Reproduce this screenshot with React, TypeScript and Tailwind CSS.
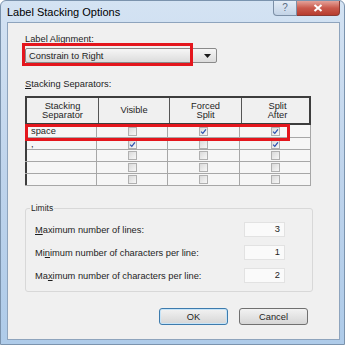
import React from 'react';

const font = { fontFamily: '"Liberation Sans", Arial, sans-serif' };

const Check: React.FC<{ on?: boolean }> = ({ on }) => (
  <span className="inline-flex w-[9px] h-[9px] border border-[#b0b0b0] bg-gradient-to-br from-[#dadada] to-[#f7f7f7] items-center justify-center">
    {on && (
      <svg viewBox="0 0 8 8" className="w-[7px] h-[7px]">
        <path d="M1.2 4.2 L3.2 6.2 L6.8 1.6" stroke="#2a4fb0" strokeWidth="1.4" fill="none" />
      </svg>
    )}
  </span>
);

const rows = [
  { sep: 'space', v: false, f: true, s: true },
  { sep: ',', v: true, f: false, s: true },
  { sep: '', v: false, f: false, s: false },
  { sep: '', v: false, f: false, s: false },
  { sep: '', v: false, f: false, s: false },
];

const limits = [
  { pre: '', u: 'M', post: 'aximum number of lines:', val: '3' },
  { pre: 'Mi', u: 'n', post: 'imum number of characters per line:', val: '1' },
  { pre: 'Ma', u: 'x', post: 'imum number of characters per line:', val: '2' },
];

export default function App() {
  return (
    <div className="w-[348px] h-[348px] bg-white text-[#1e1e1e] text-[9.3px] leading-[12px]" style={font}>
      {/* window frame */}
      <div className="w-[345px] h-[345px] flex flex-col pl-[6px] pr-[4px] pb-[4px] bg-gradient-to-b from-[#d4e3f3] via-[#bfd4ec] to-[#aecbe9] border border-[#7b93ad] rounded-t-[6px]">
        {/* title bar */}
        <div className="h-[21px] flex items-start justify-between">
          <div className="pt-[5px] text-[11px] leading-[13px] text-black">Label Stacking Options</div>
          <div className="flex">
            <div className="w-[24px] h-[15px] border border-[#7c8fa6] border-t-0 rounded-bl-[4px] bg-gradient-to-b from-[#e3ecf6] to-[#c3d3e6] flex items-center justify-center text-[10px] leading-[10px] text-[#5b6d84]">?</div>
            <div className="w-[43px] h-[15px] border border-[#8a3a33] border-t-0 border-l-0 rounded-br-[4px] bg-gradient-to-b from-[#e3a29a] via-[#c9594c] to-[#b73c2e] flex items-center justify-center">
              <svg viewBox="0 0 10 8" className="w-[10px] h-[8px]">
                <path d="M1.5 1 L8.5 7 M8.5 1 L1.5 7" stroke="white" strokeWidth="2" />
              </svg>
            </div>
          </div>
        </div>

        {/* client area */}
        <div className="relative flex-1 flex flex-col bg-[#f0f0f0] border border-[#8ea4bd] pl-[17px]">
          <div className="mt-[10px]">Label Alignment:</div>
          <div className="mt-[3px] w-[192px] h-[15px] flex items-center justify-between border border-[#8a8a8a] rounded-[2px] bg-gradient-to-b from-[#f6f6f6] to-[#dcdcdc]">
            <span className="pl-[3px]">Constrain to Right</span>
            <svg viewBox="0 0 7 4" className="w-[7px] h-[4px] mr-[5px]">
              <path d="M0 0 L7 0 L3.5 4 Z" fill="#1a1a1a" />
            </svg>
          </div>

          <div className="mt-[15px]"><span className="underline">S</span>tacking Separators:</div>

          {/* separators table */}
          <div className="mt-[6px] w-[286px] bg-[#f6f6f6]">
            <div className="grid grid-cols-[72px_71px_72px_71px] h-[29px] border-2 border-[#3d3d3d] bg-[#f0f0f0] text-center leading-[9px]">
              <div className="flex items-center justify-center border-r border-[#555]">Stacking<br />Separator</div>
              <div className="flex items-center justify-center border-r border-[#555]">Visible</div>
              <div className="flex items-center justify-center border-r border-[#555]">Forced<br />Split</div>
              <div className="flex items-center justify-center">Split<br />After</div>
            </div>
            {rows.map((r, i) => (
              <div
                key={i}
                className={`grid grid-cols-[72px_71px_72px_71px] border-b border-r border-[#a7a7a7] ${i === 0 ? 'h-[13px]' : 'h-[12px]'}`}
              >
                <div className="border-l-2 border-l-[#3d3d3d] border-r border-[#a7a7a7] pl-[4px] flex items-center">{r.sep}</div>
                <div className="border-r border-[#a7a7a7] flex items-center justify-center"><Check on={r.v} /></div>
                <div className="border-r border-[#a7a7a7] flex items-center justify-center"><Check on={r.f} /></div>
                <div className="flex items-center justify-center"><Check on={r.s} /></div>
              </div>
            ))}
          </div>

          {/* limits group */}
          <fieldset className="mt-[16px] w-[288px] h-[90px] border border-[#d8d8d8] rounded-[3px]">
            <legend className="ml-[4px] px-[1px] text-[8.5px]">Limits</legend>
            <div className="flex flex-col gap-[8px] mt-[8px] pl-[9px] pr-[27px]">
              {limits.map((l) => (
                <div key={l.val} className="flex items-center justify-between h-[15px]">
                  <span>{l.pre}<span className="underline">{l.u}</span>{l.post}</span>
                  <span className="w-[41px] h-[15px] border border-[#e2e2e2] bg-[#fafafa] text-right pr-[4px] leading-[13px]">{l.val}</span>
                </div>
              ))}
            </div>
          </fieldset>

          {/* buttons */}
          <div className="mt-[16px] flex justify-end gap-[11px] pr-[31px]">
            <button className="w-[69px] h-[17px] border border-[#3d7bad] rounded-[3px] bg-gradient-to-b from-[#f2f2f2] to-[#d6d6d6] shadow-[inset_0_0_0_1px_#c6e4f8]">OK</button>
            <button className="w-[69px] h-[17px] border border-[#707070] rounded-[3px] bg-gradient-to-b from-[#f2f2f2] to-[#d6d6d6]">Cancel</button>
          </div>

          {/* red annotation boxes */}
          <div className="absolute left-[14px] top-[20px] w-[171px] h-[23px] border-[3px] border-[#e4161d]" />
          <div className="absolute left-[17px] top-[101px] w-[265px] h-[17px] border-[3px] border-[#e4161d]" />
        </div>
      </div>
    </div>
  );
}
